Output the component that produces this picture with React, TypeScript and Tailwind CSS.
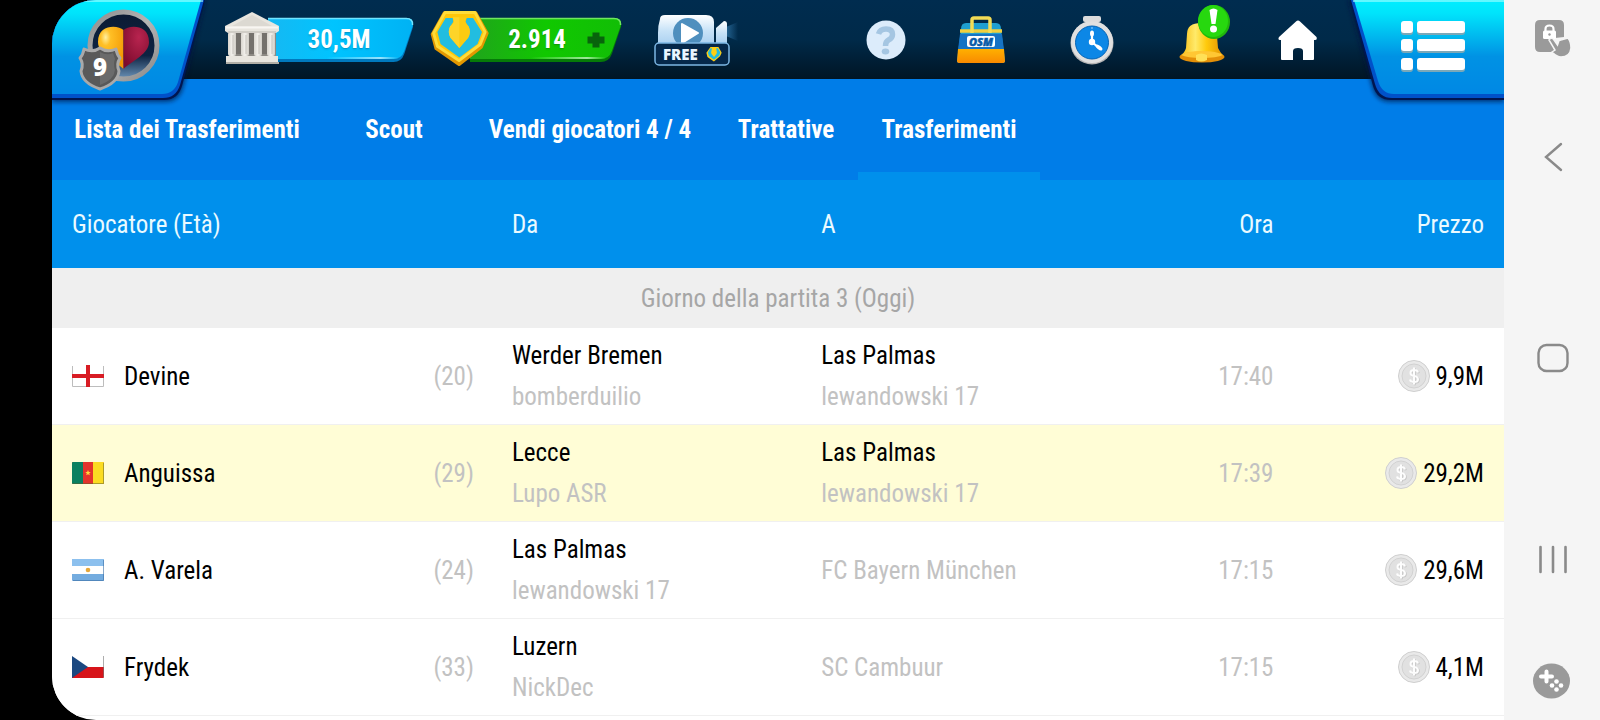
import type { ReactNode } from "react";

type Club = { name: string; manager?: string };
type Transfer = {
  flag: ReactNode;
  player: string;
  age: number;
  from: Club;
  to: Club;
  time: string;
  price: string;
  own?: boolean;
};

const England = () => (
  <svg viewBox="0 0 32 22" className="h-[22px] w-8" aria-hidden="true">
    <rect width="32" height="22" rx="1" fill="#fff" />
    <path d="M.5 1V21.500H31.500V1" fill="none" stroke="#bdbdbd" />
    <path d="M16 0V22M0 11H32" stroke="#d81c24" strokeWidth="4" />
  </svg>
);

const Cameroon = () => (
  <svg viewBox="0 0 32 22" className="h-[22px] w-8" aria-hidden="true">
    <rect width="32" height="22" rx="1" fill="#e3342c" />
    <path d="M1 0H11V22H1Q0 22 0 21V1Q0 0 1 0Z" fill="#0b8060" />
    <path d="M21 0H31Q32 0 32 1V21Q32 22 31 22H21Z" fill="#fbdc22" />
    <path d="M16 8l.8 2h2l-1.6 1.300.6 2L16 12.200l-1.800 1.100.6-2L13.200 10h2Z" fill="#ffd83a" />
    <path d="M31.500 1V21.500H1" fill="none" stroke="#5b5b2b" strokeOpacity=".5" />
  </svg>
);

const Argentina = () => (
  <svg viewBox="0 0 32 22" className="h-[22px] w-8" aria-hidden="true">
    <rect width="32" height="22" rx="1" fill="#74acdf" />
    <rect width="32" height="7" fill="#8cc0ee" />
    <rect y="7" width="32" height="8" fill="#fff" />
    <circle cx="16" cy="11" r="2.300" fill="#e7a83a" />
    <path d="M31.500 1V21.500H1" fill="none" stroke="#3a6ea5" strokeOpacity=".6" />
  </svg>
);

const Czechia = () => (
  <svg viewBox="0 0 32 22" className="h-[22px] w-8" aria-hidden="true">
    <rect width="32" height="22" rx="1" fill="#fff" />
    <path d="M0 11H32V21Q32 22 31 22H0Z" fill="#d7141a" />
    <path d="M0 0L16 11L0 22Z" fill="#1b4880" />
    <path d="M31.500 0V21" stroke="#777" strokeOpacity=".6" />
  </svg>
);

const transfers: Transfer[] = [
  { flag: <England />, player: "Devine", age: 20, from: { name: "Werder Bremen", manager: "bomberduilio" }, to: { name: "Las Palmas", manager: "lewandowski 17" }, time: "17:40", price: "9,9M" },
  { flag: <Cameroon />, player: "Anguissa", age: 29, from: { name: "Lecce", manager: "Lupo ASR" }, to: { name: "Las Palmas", manager: "lewandowski 17" }, time: "17:39", price: "29,2M", own: true },
  { flag: <Argentina />, player: "A. Varela", age: 24, from: { name: "Las Palmas", manager: "lewandowski 17" }, to: { name: "FC Bayern München" }, time: "17:15", price: "29,6M" },
  { flag: <Czechia />, player: "Frydek", age: 33, from: { name: "Luzern", manager: "NickDec" }, to: { name: "SC Cambuur" }, time: "17:15", price: "4,1M" },
];

const tabs = [
  { label: "Lista dei Trasferimenti", width: "min-w-[270px]" },
  { label: "Scout", width: "min-w-36" },
  { label: "Vendi giocatori 4 / 4", width: "min-w-[248px]" },
  { label: "Trattative", width: "min-w-36" },
  { label: "Trasferimenti", width: "min-w-[182px]", active: true },
];

function ClubBadge() {
  return (
    <svg viewBox="0 0 160 108" className="block h-[108px] w-40" aria-hidden="true">
      <defs>
        <linearGradient id="panel" x1="0" y1="0" x2="0" y2="1">
          <stop offset="0" stopColor="#00eeff" />
          <stop offset=".14" stopColor="#00e4fb" />
          <stop offset=".6" stopColor="#0092e4" />
          <stop offset="1" stopColor="#0088e4" />
        </linearGradient>
        <linearGradient id="ring" x1="0" y1="0" x2="1" y2="1">
          <stop offset="0" stopColor="#8d8d8d" />
          <stop offset=".5" stopColor="#b5b5b5" />
          <stop offset="1" stopColor="#8a8a8a" />
        </linearGradient>
        <linearGradient id="night" x1="0" y1="0" x2="0" y2="1">
          <stop offset="0" stopColor="#0c1b33" />
          <stop offset=".65" stopColor="#0d2342" />
          <stop offset="1" stopColor="#6b93b8" />
        </linearGradient>
        <radialGradient id="gold" cx=".3" cy=".25" r=".8">
          <stop offset="0" stopColor="#fff0a0" />
          <stop offset=".25" stopColor="#ffbf25" />
          <stop offset="1" stopColor="#f39a05" />
        </radialGradient>
        <radialGradient id="wine" cx=".6" cy=".25" r=".8">
          <stop offset="0" stopColor="#b8244f" />
          <stop offset="1" stopColor="#7c0b2d" />
        </radialGradient>
        <filter id="soft"><feGaussianBlur stdDeviation="2" /></filter>
      </defs>
      <path d="M0 0H154L131 88Q127 102 113 102H0Z" fill="#00143c" opacity=".65" filter="url(#soft)" />
      <path d="M0 0H153L130 86Q126 100 112 100H0Z" fill="#001650" />
      <path d="M0 0H152L128 85Q124 98 111 98H0Z" fill="#0051c9" />
      <path d="M0 0H149L126 82Q122 94 110 94H0Z" fill="url(#panel)" />
      <path d="M0 1H151" stroke="#a4ffff" strokeWidth="2" opacity=".6" />
      <circle cx="71.500" cy="45.500" r="33.500" fill="url(#night)" stroke="url(#ring)" strokeWidth="5" />
      <path d="M71.500 30C66 25 46 24 46 42C46 54 62 60 71.500 69Z" fill="url(#gold)" />
      <path d="M71.500 30C77 25 97 24 97 42C97 54 81 60 71.500 69Z" fill="url(#wine)" />
      <path d="M32 49Q41 53 48 48Q55 53 64 49Q65 55 68 58Q64 64 67 71Q66 83 48 89Q30 83 29 71Q32 64 28 58Q31 55 32 49Z" fill="#595959" stroke="#a9a9a9" strokeWidth="3" strokeLinejoin="round" />
      <path d="M48 52Q55 56 61 53L63 59Q61 64 63 70Q62 80 48 85Z" fill="#6b6b6b" />
      <text x="48" y="76" textAnchor="middle" fill="#fff" fontFamily="Open Sans, sans-serif" fontWeight="800" fontSize="24">9</text>
    </svg>
  );
}

function Bank() {
  return (
    <svg viewBox="0 0 56 54" className="h-[54px] w-14" aria-hidden="true">
      <defs>
        <linearGradient id="stone" x1="0" y1="0" x2="1" y2="0">
          <stop offset="0" stopColor="#d9d6cf" />
          <stop offset=".5" stopColor="#f3f1ec" />
          <stop offset="1" stopColor="#cfccc5" />
        </linearGradient>
      </defs>
      <path d="M5 20H52V45H5Z" fill="#8d8a84" />
      <path d="M12 22H18V43H12ZM25 22H30V43H25ZM38 22H43V43H38Z" fill="#74716c" />
      {[4, 17, 30, 43].map((x) => (
        <g key={x}>
          <rect x={x} y="21" width="8" height="24" rx="2" fill="url(#stone)" />
          <path d={`M${x + 5} 24V43`} stroke="#c4c1ba" />
        </g>
      ))}
      <path d="M2 45H54V51H2Z" fill="#e9e6df" />
      <path d="M2 51H55V53H2Z" fill="#b1aea6" />
      <path d="M28 1L55 15V20L52 22H4L1 20V15Z" fill="#e8e5de" />
      <path d="M28 4L48 15H8Z" fill="#dcd9d2" />
      <path d="M2 16.500H54" stroke="#f8f6f2" strokeWidth="2" />
      <path d="M4 21H52" stroke="#b9b6af" />
    </svg>
  );
}

function Gem({ className }: { className: string }) {
  return (
    <svg viewBox="28 26 186 182" className={className} aria-hidden="true">
      <path d="M72 38H170L206 102L188 145L118 200L46 150L34 105Z" fill="#e39700" stroke="#e39700" strokeWidth="10" strokeLinejoin="round" />
      <path d="M74 37H168L200 98L184 138L118 188L50 143L38 102Z" fill="#ffc608" stroke="#ffdc3a" strokeWidth="9" strokeLinejoin="round" />
      <path d="M76 54H98L100 66L90 82Q82 98 92 116L119 148L146 116Q156 98 148 82L138 66L142 54H162L190 98L176 136L119 178L60 136L50 98Z" fill="#22bde0" />
      <path d="M98 52H142L137 63Q138 74 148 80Q157 98 147 116L119 148L91 116Q81 98 90 80Q101 74 102 63Z" fill="#fccb10" />
      <path d="M119 52V148L91 116Q81 98 90 80Q101 74 102 63L98 52Z" fill="#ffe04a" opacity=".45" />
    </svg>
  );
}

function Camera() {
  return (
    <svg viewBox="0 0 84 54" className="h-[54px] w-21" aria-hidden="true">
      <defs>
        <linearGradient id="cam" x1="0" y1="0" x2="0" y2="1">
          <stop offset="0" stopColor="#fff" />
          <stop offset=".5" stopColor="#c7e2f7" />
          <stop offset="1" stopColor="#a5cdef" />
        </linearGradient>
        <linearGradient id="beam" x1="0" y1="0" x2="1" y2="0">
          <stop offset="0" stopColor="#3c8ac2" stopOpacity=".6" />
          <stop offset="1" stopColor="#3c8ac2" stopOpacity="0" />
        </linearGradient>
      </defs>
      <path d="M72 14L84 9V28L72 23Z" fill="url(#beam)" />
      <path d="M6 6Q6 2 11 2H52Q60 2 60 9V34H4V20Q4 12 6 6Z" fill="url(#cam)" />
      <path d="M62 15L70 8Q73 8 73 11V32H62Z" fill="url(#cam)" />
      <circle cx="34" cy="20" r="15" fill="#4f8fbe" />
      <path d="M28 11L44 20L28 30Z" fill="#fff" stroke="#fff" strokeWidth="2" strokeLinejoin="round" />
      <rect x="1" y="30" width="74" height="22" rx="4" fill="#05284a" stroke="#7cb6e3" strokeWidth="1.500" />
      <text x="9" y="46.500" fill="#e9f5ff" fontFamily="Open Sans, sans-serif" fontWeight="800" fontSize="15">FREE</text>
      <g transform="translate(52 33) scale(.09)">
        <path d="M50 10H138L174 76L156 115L88 172L16 122L4 76Z" fill="#ffcf12" />
        <path d="M50 26H66L60 56Q52 72 62 90L89 122L116 90Q126 72 118 56L114 26H132L159 72L146 108L89 152L32 110L21 72Z" fill="#22bde0" />
      </g>
    </svg>
  );
}

function Help() {
  return (
    <svg viewBox="0 0 40 40" className="size-10" aria-hidden="true">
      <circle cx="20" cy="20" r="19.500" fill="#dcecfb" />
      <path d="M12.500 14Q14 9 20 9Q26.500 9 26.500 14.500Q26.500 18 22.500 20Q19.500 21.500 19.500 26" fill="none" stroke="#a5c6e2" strokeWidth="5.500" />
      <ellipse cx="19.500" cy="31.500" rx="3.800" ry="3" fill="#a5c6e2" />
    </svg>
  );
}

function Bag() {
  return (
    <svg viewBox="0 0 48 48" className="size-12" aria-hidden="true">
      <defs>
        <linearGradient id="bagBase" x1="0" y1="0" x2="0" y2="1">
          <stop offset="0" stopColor="#ffb000" />
          <stop offset="1" stopColor="#f98a00" />
        </linearGradient>
      </defs>
      <path d="M9 7H39Q44 7 44 13L48 45Q48 47 45 47H3Q0 47 0 45L4 13Q4 7 9 7Z" fill="#1f9fd0" />
      <path d="M3 18H45L47 34H1Z" fill="#1673c4" />
      <path d="M1 33H47L48 45Q48 47 45 47H3Q0 47 0 45Z" fill="url(#bagBase)" />
      <path d="M3 15H45" stroke="#f0cf3e" strokeWidth="3.500" />
      <path d="M15 17V4Q15 2 17 2H31Q33 2 33 4V17" fill="none" stroke="#f3dc55" strokeWidth="3.500" />
      <rect x="10" y="20" width="28" height="11" rx="2" fill="#fff" />
      <text x="24" y="29.500" textAnchor="middle" fill="#0a5ba8" stroke="#0a5ba8" strokeWidth=".5" fontFamily="Open Sans, sans-serif" fontWeight="800" fontStyle="italic" fontSize="11">OSM</text>
    </svg>
  );
}

function Stopwatch() {
  return (
    <svg viewBox="0 0 44 50" className="h-[50px] w-11" aria-hidden="true">
      <rect x="18" y="5" width="8" height="5" fill="#a8a8a8" />
      <rect x="13" y="1" width="18" height="6" rx="2" fill="#dcdcdc" />
      <circle cx="22" cy="28" r="21.500" fill="#b4b4b4" />
      <circle cx="22" cy="27" r="21" fill="#e0e0e0" />
      <circle cx="22" cy="27.500" r="16.500" fill="#0c87e6" stroke="#0765b5" />
      <path d="M22 18V27L29 33" fill="none" stroke="#fff" strokeWidth="2.200" />
      <circle cx="22" cy="27" r="3.200" fill="#fff" />
      <ellipse cx="22" cy="18.500" rx="2" ry="3" fill="#fff" />
      <ellipse cx="29" cy="32.500" rx="4" ry="2" transform="rotate(38 29 32.500)" fill="#fff" />
      <path d="M22 12V14" stroke="#9fd3ff" strokeWidth="1" />
    </svg>
  );
}

function Bell() {
  return (
    <svg viewBox="0 0 52 60" className="h-[60px] w-13" aria-hidden="true">
      <defs>
        <linearGradient id="bell" x1="0" y1="0" x2="1" y2="0">
          <stop offset="0" stopColor="#f8b90a" />
          <stop offset=".35" stopColor="#ffea6a" />
          <stop offset=".6" stopColor="#ffca0c" />
          <stop offset="1" stopColor="#e08e02" />
        </linearGradient>
      </defs>
      <path d="M8 30Q8 19 22 19Q37 19 38 32L39 44Q41 48 45 53H1Q6 48 7 44Z" fill="url(#bell)" />
      <ellipse cx="23" cy="53" rx="22.500" ry="5.500" fill="#e38f08" />
      <path d="M2 51Q8 47 23 47Q38 47 44 51Q38 54 23 54Q8 54 2 51Z" fill="#ffc733" />
      <path d="M17 51Q22 48 28 51V56Q22 59 17 56Z" fill="#ffe057" />
      <ellipse cx="35" cy="18" rx="16" ry="17" fill="#20b60c" />
      <ellipse cx="34" cy="17" rx="15" ry="16" fill="#27d80f" />
      <path d="M30.500 6Q34.500 3 38.500 6L36.500 20H32.500Z" fill="#fff" />
      <circle cx="34.500" cy="25" r="3.500" fill="#fff" />
    </svg>
  );
}

function Home() {
  return (
    <svg viewBox="0 0 40 40" className="size-10" aria-hidden="true">
      <path d="M20 0.500Q21 0.500 22 1.500L38.500 17Q39.500 20 37 20H36V39Q36 40 35 40H25V31Q25 28 20 28Q15 28 15 31V40H4Q3 40 3 39V20H2Q-.5 20 1 17L18 1.500Q19 .5 20 .5Z" fill="#fff" />
    </svg>
  );
}

function MenuPanel() {
  return (
    <svg viewBox="0 0 160 108" className="block h-[108px] w-40" aria-hidden="true">
      <path d="M4 0L28 87Q32 102 46 102H160V0Z" fill="#00143c" opacity=".65" filter="url(#soft)" />
      <path d="M6 0L29 86Q33 100 47 100H160V0Z" fill="#001650" />
      <path d="M7 0L31 84Q35 98 48 98H160V0Z" fill="#0051c9" />
      <path d="M10 0L34 81Q38 94 50 94H160V0Z" fill="url(#panel)" />
      <path d="M9 1H160" stroke="#a4ffff" strokeWidth="2" opacity=".6" />
      {[21, 39, 58].map((y) => (
        <g key={y}>
          <rect x="57" y={y + 2} width="12" height="12" rx="3" fill="#7ba8b8" />
          <rect x="73" y={y + 2} width="48" height="12" rx="3" fill="#7ba8b8" />
          <rect x="57" y={y} width="12" height="12" rx="3" fill="#fff" />
          <rect x="73" y={y} width="48" height="12" rx="3" fill="#fff" />
        </g>
      ))}
    </svg>
  );
}

function BarShape({ green = false }: { green?: boolean }) {
  return (
    <svg viewBox="0 0 150 46" preserveAspectRatio="none" className="absolute inset-0 h-full w-full" aria-hidden="true">
      <defs>
        <linearGradient id="blueBar" x1="0" y1="0" x2="1" y2="0">
          <stop offset="0" stopColor="#16b8f2" />
          <stop offset=".45" stopColor="#00c4ff" />
          <stop offset="1" stopColor="#00b2f4" />
        </linearGradient>
        <linearGradient id="greenBar" x1="0" y1="0" x2="1" y2="0">
          <stop offset="0" stopColor="#20a41c" />
          <stop offset=".5" stopColor="#10c800" />
          <stop offset="1" stopColor="#12be06" />
        </linearGradient>
        <linearGradient id="shine" x1="0" y1="0" x2="1" y2="0">
          <stop offset="0" stopColor="#fff" stopOpacity="0" />
          <stop offset=".75" stopColor="#fff" stopOpacity=".6" />
          <stop offset="1" stopColor="#fff" stopOpacity="0" />
        </linearGradient>
      </defs>
      <path d="M0 3H142Q150 3 149 10L140 37Q137 45 129 45H0Z" fill={green ? "#067a08" : "#0079be"} />
      <path d="M0 1H142Q150 1 149 8L140 34Q137 42 129 42H0Z" fill={green ? "url(#greenBar)" : "url(#blueBar)"} />
      <path d="M0 1.500H142Q149 1.500 148.500 8" fill="none" stroke={green ? "#6fe660" : "#70e4ff"} strokeWidth="1.500" />
      <rect x="60" y="40" width="74" height="2" fill="url(#shine)" />
    </svg>
  );
}

function Coin() {
  return (
    <svg viewBox="0 0 32 32" className="size-8 shrink-0" aria-hidden="true">
      <circle cx="16" cy="16" r="15.500" fill="#e9e9e9" stroke="#cfcfcf" />
      <circle cx="16" cy="16" r="12" fill="#e1e1e1" stroke="#d2d2d2" />
      <path d="M20 12.500Q19.500 10 16 10Q12.500 10 12.500 13Q12.500 15.500 16 16Q20 16.500 20 19.500Q20 22 16 22Q12.500 22 12 19.500M16 7.500V24.500" transform="translate(.8 .8)" fill="none" stroke="#c6c6c6" strokeWidth="2" />
      <path d="M20 12.500Q19.500 10 16 10Q12.500 10 12.500 13Q12.500 15.500 16 16Q20 16.500 20 19.500Q20 22 16 22Q12.500 22 12 19.500M16 7.500V24.500" fill="none" stroke="#fdfdfd" strokeWidth="2" />
    </svg>
  );
}

function ClubCell({ club }: { club: Club }) {
  if (!club.manager) return <span className="text-[#c2c2c2]">{club.name}</span>;
  return (
    <>
      <div className="text-black">{club.name}</div>
      <div className="text-[#c2c2c2]">{club.manager}</div>
    </>
  );
}

function TopBar() {
  return (
    <header className="relative z-10 flex h-[79px] items-start bg-linear-to-b from-[#002c4f] via-[#002a49] to-[#001525]">
      <button type="button" aria-label="Club" className="-mb-8 shrink-0"><ClubBadge /></button>
      <div className="ml-3 flex h-[79px] flex-1 items-center">
        <button type="button" className="flex items-center">
          <span className="relative z-10 -mr-3 -mt-1"><Bank /></span>
          <span className="relative flex h-[46px] w-[146px] items-center justify-center pr-1 text-[25px] font-bold text-white">
            <BarShape />
            <span className="relative text-shadow-sm">30,5M</span>
          </span>
        </button>
        <button type="button" className="ml-4 flex items-center">
          <span className="relative z-10 -mr-5 -mt-1"><Gem className="h-[58px] w-[60px]" /></span>
          <span className="relative flex h-[46px] w-[152px] items-center justify-end gap-5 pr-4 text-[25px] font-bold text-white">
            <BarShape green />
            <span className="relative text-shadow-sm">2.914</span>
            <svg viewBox="0 0 20 18" className="relative h-[18px] w-5" aria-hidden="true">
              <path d="M10 1.500V16.500M1.500 9H18.500" stroke="#08640c" strokeWidth="7" />
            </svg>
          </span>
        </button>
        <button type="button" aria-label="Video" className="ml-8"><Camera /></button>
        <div className="ml-auto flex items-center">
          <button type="button" aria-label="Aiuto" className="flex w-20 justify-center"><Help /></button>
          <button type="button" aria-label="Negozio" className="flex w-[110px] justify-center"><Bag /></button>
          <button type="button" aria-label="Timer" className="flex w-28 justify-center"><Stopwatch /></button>
          <button type="button" aria-label="Notifiche" className="-mt-3 flex w-[114px] justify-center"><Bell /></button>
          <button type="button" aria-label="Home" className="mr-[10px] flex w-[72px] justify-center"><Home /></button>
        </div>
      </div>
      <button type="button" aria-label="Menu" className="-mb-8 shrink-0"><MenuPanel /></button>
    </header>
  );
}

function SystemBar() {
  return (
    <aside className="flex w-24 shrink-0 flex-col items-center bg-[#f5f5f5] py-5 pl-[2px] text-[#8a8a8a]">
      <button type="button" aria-label="Blocco tocco">
        <svg viewBox="0 0 36 38" className="h-[38px] w-9" aria-hidden="true">
          <path d="M5 0H24Q29 0 29 5V17L20 18L15 20L20 32H5Q0 32 0 27V5Q0 0 5 0Z" fill="#9a9a9a" />
          <path d="M10.500 11V9Q10.500 5.500 14.500 5.500Q18.500 5.500 18.500 9V11" fill="none" stroke="#fff" strokeWidth="2.200" />
          <rect x="8" y="10.500" width="13" height="8.500" rx="1.500" fill="#fff" />
          <path d="M14 20Q16.500 16.500 19 20L22.500 25L24 20.500L33 18Q36 22 36 28Q35 37 26 37Q22 37 17 32L20 30Z" fill="#9a9a9a" stroke="#f5f5f5" strokeWidth="1.500" />
          <circle cx="14.500" cy="14.500" r="1.200" fill="#999" />
        </svg>
      </button>
      <div className="flex flex-1 flex-col items-center justify-between pt-[84px] pb-[88px]">
        <button type="button" aria-label="Indietro">
          <svg viewBox="0 0 20 30" className="h-[30px] w-5" aria-hidden="true">
            <path d="M18 2L3 15L18 28" fill="none" stroke="currentColor" strokeWidth="2.400" strokeLinecap="round" />
          </svg>
        </button>
        <button type="button" aria-label="Schermata principale">
          <svg viewBox="0 0 32 30" className="h-[30px] w-8" aria-hidden="true">
            <rect x="1.500" y="2" width="29" height="26" rx="8" fill="none" stroke="currentColor" strokeWidth="2.400" />
          </svg>
        </button>
        <button type="button" aria-label="App recenti">
          <svg viewBox="0 0 30 30" className="size-[30px]" aria-hidden="true">
            <path d="M2.500 3V28M15 3V28M27.500 3V28" stroke="currentColor" strokeWidth="2.600" strokeLinecap="round" />
          </svg>
        </button>
      </div>
      <button type="button" aria-label="Giochi">
        <svg viewBox="0 0 40 38" className="h-[38px] w-10" aria-hidden="true">
          <ellipse cx="18.500" cy="19" rx="18.500" ry="17.500" fill="#9a9a9a" />
          <path d="M13.500 9.500V19.500M8 14.500H19" stroke="#fff" strokeWidth="4" strokeLinecap="round" />
          <circle cx="23.500" cy="19.500" r="2.300" fill="#fff" />
          <circle cx="19" cy="23.500" r="2.300" fill="#fff" />
          <circle cx="28" cy="23.500" r="2.300" fill="#fff" />
          <circle cx="23.500" cy="27.500" r="2.300" fill="#fff" />
        </svg>
      </button>
    </aside>
  );
}

export default function App() {
  return (
    <div className="flex min-h-screen bg-black pl-[52px] font-['Liberation_Sans_Narrow','Roboto_Condensed','Liberation_Sans',sans-serif]">
      <main className="min-w-0 flex-1 overflow-hidden rounded-l-[44px] bg-white">
        <TopBar />
        <nav className="flex h-[101px] bg-[#007de8]">
          {tabs.map((tab) => (
            <a
              key={tab.label}
              href="#"
              aria-current={tab.active ? "page" : undefined}
              className={`flex items-center justify-center border-b-8 px-4 pt-2 text-[25px] font-bold whitespace-nowrap text-white ${tab.width} ${tab.active ? "border-[#0090ec]" : "border-transparent"}`}
            >
              {tab.label}
            </a>
          ))}
        </nav>
        <table className="w-full table-fixed border-separate border-spacing-0 text-left text-[25px] leading-[41px]">
          <colgroup>
            <col className="w-[20%]" />
            <col className="w-[10.300%]" />
            <col className="w-[21.300%]" />
            <col className="w-[21.300%]" />
            <col className="w-[12.600%]" />
            <col className="w-[14.500%]" />
          </colgroup>
          <thead>
            <tr className="h-[88px] bg-[#0090ec] text-[#eafaff]">
              <th colSpan={2} className="px-5 font-normal">Giocatore (Età)</th>
              <th className="px-5 font-normal">Da</th>
              <th className="px-5 font-normal">A</th>
              <th className="px-5 text-right font-normal">Ora</th>
              <th className="px-5 text-right font-normal">Prezzo</th>
            </tr>
          </thead>
          <tbody>
            <tr className="h-[60px] bg-[#efefef] text-[#a6a6a6]">
              <th colSpan={6} className="text-center font-normal">Giorno della partita 3 (Oggi)</th>
            </tr>
            {transfers.map((t) => (
              <tr key={t.player} className={`h-[97px] *:border-b *:border-[#f0f0f0] ${t.own ? "bg-[#fffdd6]" : "bg-white"}`}>
                <td className="pl-5">
                  <div className="flex items-center gap-5 whitespace-nowrap text-black">
                    {t.flag}
                    {t.player}
                  </div>
                </td>
                <td className="pr-[18px] text-right text-[#c2c2c2]">({t.age})</td>
                <td className="px-5 whitespace-nowrap"><ClubCell club={t.from} /></td>
                <td className="px-5 whitespace-nowrap"><ClubCell club={t.to} /></td>
                <td className="pr-5 text-right text-[#c2c2c2]">{t.time}</td>
                <td className="pr-5">
                  <div className="flex items-center justify-end gap-[6px] text-black">
                    <Coin />
                    {t.price}
                  </div>
                </td>
              </tr>
            ))}
          </tbody>
        </table>
      </main>
      <SystemBar />
    </div>
  );
}
